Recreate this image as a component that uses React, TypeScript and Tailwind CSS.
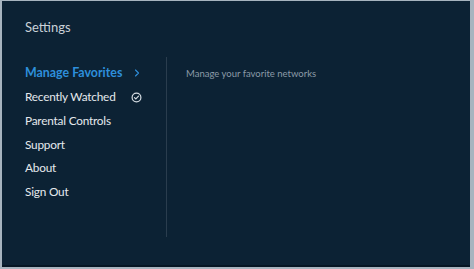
import { ChevronRight } from "lucide-react";

const items = [
  { label: "Manage Favorites", active: true },
  { label: "Recently Watched", check: true },
  { label: "Parental Controls" },
  { label: "Support" },
  { label: "About" },
  { label: "Sign Out" },
];

function CheckCircle() {
  return (
    <svg width="11" height="11" viewBox="0 0 12 12" fill="none" stroke="#d6dde3" strokeWidth="1.3">
      <circle cx="6" cy="6" r="4.8" />
      <path d="M3.8 6.2 L5.3 7.6 L8.2 4.5" strokeLinecap="round" strokeLinejoin="round" />
    </svg>
  );
}

export default function App() {
  return (
    <div
      className="w-[474px] h-[269px] bg-[#a7b4bf] pt-px pl-[2px] pr-[4px] pb-[2px]"
      style={{ fontFamily: "Lato, 'Open Sans', sans-serif" }}
    >
      <div className="w-full h-full bg-[#0c2234] border-b-2 border-[#061624] flex flex-col">
        <h1 className="pl-[23px] pt-[18px] text-[13px] leading-[16px] text-[#c9d1d8] font-normal">
          Settings
        </h1>
        <div className="flex mt-[22px] h-[180px]">
          <ul className="w-[164px] pl-[23px] pt-[4.5px] flex flex-col">
            {items.map((it) => (
              <li
                key={it.label}
                className={`h-[23.7px] flex items-center ${
                  it.active
                    ? "text-[#2e8fdb] font-bold text-[12.4px]"
                    : "text-[#e4e9ed] font-normal text-[11.8px] tracking-[-0.2px]"
                }`}
              >
                <span className="w-[106px]">{it.label}</span>
                {it.active && <ChevronRight size={12} strokeWidth={2.2} className="text-[#2e8fdb]" />}
                {it.check && <CheckCircle />}
              </li>
            ))}
          </ul>
          <div className="w-px bg-[#2a3d4e] h-full" />
          <p className="pl-[19px] pt-[10px] text-[9.5px] text-[#8b9aa7]">
            Manage your favorite networks
          </p>
        </div>
      </div>
    </div>
  );
}
